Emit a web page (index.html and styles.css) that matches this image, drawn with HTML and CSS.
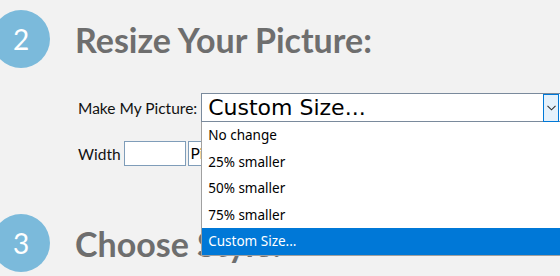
FILE: index.html
```html
<!DOCTYPE html>
<html>
<head>
<meta charset="utf-8">
<link rel="stylesheet" href="styles.css">
</head>
<body>
<div class="page">
  <div class="step step-two">
    <div class="num">2</div>
    <h2 class="title">Resize Your Picture:</h2>
  </div>
  <div class="form">
    <div class="row row-make">
      <span class="label">Make My Picture:</span>
      <div class="select">
        <span class="select-value">Custom Size...</span>
        <span class="select-btn">
          <svg width="9" height="6" viewBox="0 0 9 6"><path d="M0.5 0.8 L4.5 4.8 L8.5 0.8" fill="none" stroke="#333" stroke-width="1.1"/></svg>
        </span>
        <ul class="list">
          <li>No change</li>
          <li>25% smaller</li>
          <li>50% smaller</li>
          <li>75% smaller</li>
          <li class="sel">Custom Size...</li>
        </ul>
      </div>
    </div>
    <div class="row row-width">
      <span class="label">Width</span>
      <span class="input"></span>
      <span class="unit">Pixels</span>
    </div>
  </div>
  <div class="step step-three">
    <div class="num">3</div>
    <h2 class="title">Choose Style:</h2>
  </div>
</div>
</body>
</html>
```
FILE: styles.css
```css
html, body {
  margin: 0;
  padding: 0;
  background: #f2f2f2;
  overflow: hidden;
}
.page {
  width: 560px;
  height: 276px;
  overflow: hidden;
  font-family: Lato, "Open Sans", sans-serif;
}
.step {
  display: flex;
  align-items: center;
  gap: 25px;
  margin-left: -8px;
}
.step-two {
  padding-top: 10px;
}
.step-three {
  margin-top: 48px;
}
.num {
  width: 58px;
  height: 58px;
  border-radius: 50%;
  background: #7bbadb;
  color: #fff;
  font-family: Lato, sans-serif;
  font-size: 28px;
  display: flex;
  align-items: center;
  justify-content: center;
  flex: none;
}
.title {
  margin: 0;
  font-family: Lato, sans-serif;
  font-weight: 700;
  font-size: 34px;
  color: #6e6e6e;
  white-space: nowrap;
}
.form {
  padding-left: 78px;
  margin-top: 25px;
}
.row {
  display: flex;
  align-items: center;
}
.label {
  font-size: 15.5px;
  color: #111;
  white-space: nowrap;
  flex: none;
}
.row-make .label {
  margin-right: 4px;
}
.select {
  position: relative;
  width: 358px;
  height: 27px;
  border: 1px solid #7a8a9c;
  border-right: none;
  background: #fff;
  display: flex;
  align-items: center;
  flex: none;
}
.select-value {
  flex: 1;
  padding-left: 6px;
  font-family: "DejaVu Sans", Verdana, sans-serif;
  font-size: 22px;
  color: #000;
  white-space: nowrap;
}
.select-btn {
  width: 14px;
  height: 26px;
  border: 1px solid #0078d7;
  background: #e5f1fb;
  display: flex;
  align-items: center;
  justify-content: center;
  margin-right: 1px;
}
.list {
  position: absolute;
  left: -1px;
  top: 28px;
  width: 360px;
  margin: 0;
  padding: 0;
  list-style: none;
  background: #fff;
  border: 1px solid #a0a0a0;
  border-top: none;
  font-family: "Noto Sans", "Open Sans", sans-serif;
  font-size: 13.5px;
  color: #000;
}
.list li {
  height: 26.6px;
  line-height: 26px;
  padding-left: 6px;
  white-space: nowrap;
}
.list li.sel {
  background: #0078d7;
  color: #fff;
}
.row-width {
  margin-top: 19px;
}
.row-width .label {
  margin-right: 3px;
}
.input {
  width: 60px;
  height: 23px;
  border: 1px solid #7f9db9;
  background: #fff;
  flex: none;
}
.unit {
  margin-left: 2px;
  width: 60px;
  height: 23px;
  border: 1px solid #7f9db9;
  background: #fff;
  font-size: 15.5px;
  padding-left: 2px;
  line-height: 23px;
  flex: none;
}
```
